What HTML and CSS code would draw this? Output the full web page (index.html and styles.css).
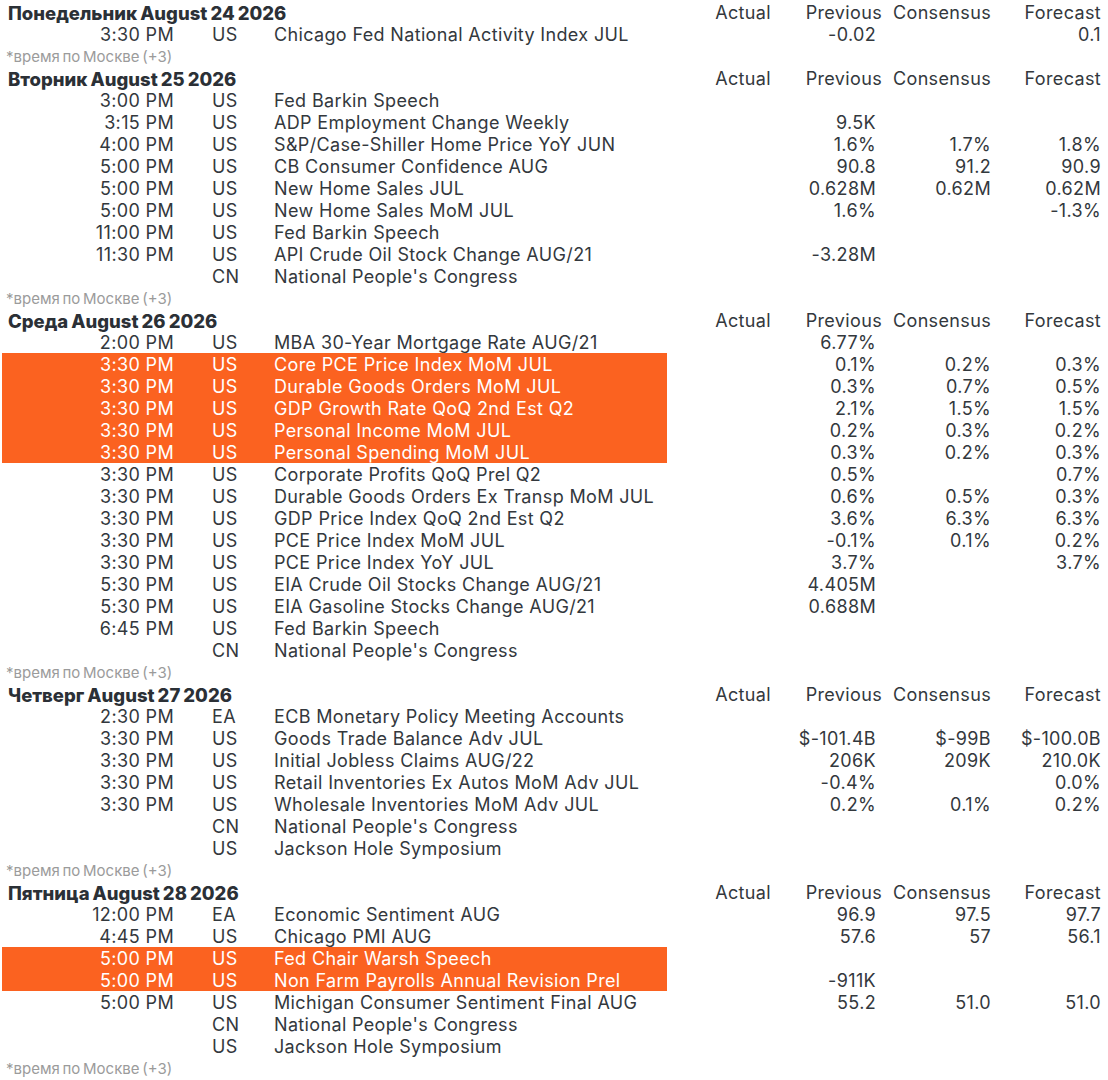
FILE: index.html
```html
<!DOCTYPE html>
<html lang="ru">
<head>
<meta charset="utf-8">
<title>Economic calendar</title>
<link rel="stylesheet" href="styles.css">
</head>
<body>
<div class="cal">

  <div class="day"><div class="title">Понедельник August 24 2026</div><div class="h">Actual</div><div class="h prev">Previous</div><div class="h">Consensus</div><div class="h">Forecast</div></div>
  <div class="row"><div class="t">3:30 PM</div><div class="c">US</div><div class="e">Chicago Fed National Activity Index JUL</div><div class="v"></div><div class="v">-0.02</div><div class="v"></div><div class="v">0.1</div></div>
  <div class="note">*время по Москве (+3)</div>

  <div class="day"><div class="title">Вторник August 25 2026</div><div class="h">Actual</div><div class="h prev">Previous</div><div class="h">Consensus</div><div class="h">Forecast</div></div>
  <div class="row"><div class="t">3:00 PM</div><div class="c">US</div><div class="e">Fed Barkin Speech</div><div class="v"></div><div class="v"></div><div class="v"></div><div class="v"></div></div>
  <div class="row"><div class="t">3:15 PM</div><div class="c">US</div><div class="e">ADP Employment Change Weekly</div><div class="v"></div><div class="v">9.5K</div><div class="v"></div><div class="v"></div></div>
  <div class="row"><div class="t">4:00 PM</div><div class="c">US</div><div class="e">S&amp;P/Case-Shiller Home Price YoY JUN</div><div class="v"></div><div class="v">1.6%</div><div class="v">1.7%</div><div class="v">1.8%</div></div>
  <div class="row"><div class="t">5:00 PM</div><div class="c">US</div><div class="e">CB Consumer Confidence AUG</div><div class="v"></div><div class="v">90.8</div><div class="v">91.2</div><div class="v">90.9</div></div>
  <div class="row"><div class="t">5:00 PM</div><div class="c">US</div><div class="e">New Home Sales JUL</div><div class="v"></div><div class="v">0.628M</div><div class="v">0.62M</div><div class="v">0.62M</div></div>
  <div class="row"><div class="t">5:00 PM</div><div class="c">US</div><div class="e">New Home Sales MoM JUL</div><div class="v"></div><div class="v">1.6%</div><div class="v"></div><div class="v">-1.3%</div></div>
  <div class="row"><div class="t">11:00 PM</div><div class="c">US</div><div class="e">Fed Barkin Speech</div><div class="v"></div><div class="v"></div><div class="v"></div><div class="v"></div></div>
  <div class="row"><div class="t">11:30 PM</div><div class="c">US</div><div class="e">API Crude Oil Stock Change AUG/21</div><div class="v"></div><div class="v">-3.28M</div><div class="v"></div><div class="v"></div></div>
  <div class="row"><div class="t"></div><div class="c">CN</div><div class="e">National People's Congress</div><div class="v"></div><div class="v"></div><div class="v"></div><div class="v"></div></div>
  <div class="note">*время по Москве (+3)</div>

  <div class="day"><div class="title">Среда August 26 2026</div><div class="h">Actual</div><div class="h prev">Previous</div><div class="h">Consensus</div><div class="h">Forecast</div></div>
  <div class="row"><div class="t">2:00 PM</div><div class="c">US</div><div class="e">MBA 30-Year Mortgage Rate AUG/21</div><div class="v"></div><div class="v">6.77%</div><div class="v"></div><div class="v"></div></div>
  <div class="row hl"><div class="t">3:30 PM</div><div class="c">US</div><div class="e">Core PCE Price Index MoM JUL</div><div class="v"></div><div class="v">0.1%</div><div class="v">0.2%</div><div class="v">0.3%</div></div>
  <div class="row hl"><div class="t">3:30 PM</div><div class="c">US</div><div class="e">Durable Goods Orders MoM JUL</div><div class="v"></div><div class="v">0.3%</div><div class="v">0.7%</div><div class="v">0.5%</div></div>
  <div class="row hl"><div class="t">3:30 PM</div><div class="c">US</div><div class="e">GDP Growth Rate QoQ 2nd Est Q2</div><div class="v"></div><div class="v">2.1%</div><div class="v">1.5%</div><div class="v">1.5%</div></div>
  <div class="row hl"><div class="t">3:30 PM</div><div class="c">US</div><div class="e">Personal Income MoM JUL</div><div class="v"></div><div class="v">0.2%</div><div class="v">0.3%</div><div class="v">0.2%</div></div>
  <div class="row hl"><div class="t">3:30 PM</div><div class="c">US</div><div class="e">Personal Spending MoM JUL</div><div class="v"></div><div class="v">0.3%</div><div class="v">0.2%</div><div class="v">0.3%</div></div>
  <div class="row"><div class="t">3:30 PM</div><div class="c">US</div><div class="e">Corporate Profits QoQ Prel Q2</div><div class="v"></div><div class="v">0.5%</div><div class="v"></div><div class="v">0.7%</div></div>
  <div class="row"><div class="t">3:30 PM</div><div class="c">US</div><div class="e">Durable Goods Orders Ex Transp MoM JUL</div><div class="v"></div><div class="v">0.6%</div><div class="v">0.5%</div><div class="v">0.3%</div></div>
  <div class="row"><div class="t">3:30 PM</div><div class="c">US</div><div class="e">GDP Price Index QoQ 2nd Est Q2</div><div class="v"></div><div class="v">3.6%</div><div class="v">6.3%</div><div class="v">6.3%</div></div>
  <div class="row"><div class="t">3:30 PM</div><div class="c">US</div><div class="e">PCE Price Index MoM JUL</div><div class="v"></div><div class="v">-0.1%</div><div class="v">0.1%</div><div class="v">0.2%</div></div>
  <div class="row"><div class="t">3:30 PM</div><div class="c">US</div><div class="e">PCE Price Index YoY JUL</div><div class="v"></div><div class="v">3.7%</div><div class="v"></div><div class="v">3.7%</div></div>
  <div class="row"><div class="t">5:30 PM</div><div class="c">US</div><div class="e">EIA Crude Oil Stocks Change AUG/21</div><div class="v"></div><div class="v">4.405M</div><div class="v"></div><div class="v"></div></div>
  <div class="row"><div class="t">5:30 PM</div><div class="c">US</div><div class="e">EIA Gasoline Stocks Change AUG/21</div><div class="v"></div><div class="v">0.688M</div><div class="v"></div><div class="v"></div></div>
  <div class="row"><div class="t">6:45 PM</div><div class="c">US</div><div class="e">Fed Barkin Speech</div><div class="v"></div><div class="v"></div><div class="v"></div><div class="v"></div></div>
  <div class="row"><div class="t"></div><div class="c">CN</div><div class="e">National People's Congress</div><div class="v"></div><div class="v"></div><div class="v"></div><div class="v"></div></div>
  <div class="note">*время по Москве (+3)</div>

  <div class="day"><div class="title">Четверг August 27 2026</div><div class="h">Actual</div><div class="h prev">Previous</div><div class="h">Consensus</div><div class="h">Forecast</div></div>
  <div class="row"><div class="t">2:30 PM</div><div class="c">EA</div><div class="e">ECB Monetary Policy Meeting Accounts</div><div class="v"></div><div class="v"></div><div class="v"></div><div class="v"></div></div>
  <div class="row"><div class="t">3:30 PM</div><div class="c">US</div><div class="e">Goods Trade Balance Adv JUL</div><div class="v"></div><div class="v">$-101.4B</div><div class="v">$-99B</div><div class="v">$-100.0B</div></div>
  <div class="row"><div class="t">3:30 PM</div><div class="c">US</div><div class="e">Initial Jobless Claims AUG/22</div><div class="v"></div><div class="v">206K</div><div class="v">209K</div><div class="v">210.0K</div></div>
  <div class="row"><div class="t">3:30 PM</div><div class="c">US</div><div class="e">Retail Inventories Ex Autos MoM Adv JUL</div><div class="v"></div><div class="v">-0.4%</div><div class="v"></div><div class="v">0.0%</div></div>
  <div class="row"><div class="t">3:30 PM</div><div class="c">US</div><div class="e">Wholesale Inventories MoM Adv JUL</div><div class="v"></div><div class="v">0.2%</div><div class="v">0.1%</div><div class="v">0.2%</div></div>
  <div class="row"><div class="t"></div><div class="c">CN</div><div class="e">National People's Congress</div><div class="v"></div><div class="v"></div><div class="v"></div><div class="v"></div></div>
  <div class="row"><div class="t"></div><div class="c">US</div><div class="e">Jackson Hole Symposium</div><div class="v"></div><div class="v"></div><div class="v"></div><div class="v"></div></div>
  <div class="note">*время по Москве (+3)</div>

  <div class="day"><div class="title">Пятница August 28 2026</div><div class="h">Actual</div><div class="h prev">Previous</div><div class="h">Consensus</div><div class="h">Forecast</div></div>
  <div class="row"><div class="t">12:00 PM</div><div class="c">EA</div><div class="e">Economic Sentiment AUG</div><div class="v"></div><div class="v">96.9</div><div class="v">97.5</div><div class="v">97.7</div></div>
  <div class="row"><div class="t">4:45 PM</div><div class="c">US</div><div class="e">Chicago PMI AUG</div><div class="v"></div><div class="v">57.6</div><div class="v">57</div><div class="v">56.1</div></div>
  <div class="row hl"><div class="t">5:00 PM</div><div class="c">US</div><div class="e">Fed Chair Warsh Speech</div><div class="v"></div><div class="v"></div><div class="v"></div><div class="v"></div></div>
  <div class="row hl"><div class="t">5:00 PM</div><div class="c">US</div><div class="e">Non Farm Payrolls Annual Revision Prel</div><div class="v"></div><div class="v">-911K</div><div class="v"></div><div class="v"></div></div>
  <div class="row"><div class="t">5:00 PM</div><div class="c">US</div><div class="e">Michigan Consumer Sentiment Final AUG</div><div class="v"></div><div class="v">55.2</div><div class="v">51.0</div><div class="v">51.0</div></div>
  <div class="row"><div class="t"></div><div class="c">CN</div><div class="e">National People's Congress</div><div class="v"></div><div class="v"></div><div class="v"></div><div class="v"></div></div>
  <div class="row"><div class="t"></div><div class="c">US</div><div class="e">Jackson Hole Symposium</div><div class="v"></div><div class="v"></div><div class="v"></div><div class="v"></div></div>
  <div class="note">*время по Москве (+3)</div>

</div>
</body>
</html>
```

FILE: styles.css
```css
html, body {
  margin: 0;
  padding: 0;
  background: #ffffff;
}

.cal {
  padding: 1px 0 0 2px;
  font-family: "Inter", "Liberation Sans", sans-serif;
  font-size: 18px;
  color: #33383d;
}

.row,
.day {
  display: grid;
  grid-template-columns: 172px 100px 393px 104px 105px 115px 110px;
  grid-template-rows: 22px;
  height: 22px;
  white-space: nowrap;
}

.row > div,
.day > div {
  box-sizing: border-box;
  height: 22px;
  padding-top: 1px;
  line-height: 22px;
  letter-spacing: 0.35px;
}

.t {
  text-align: right;
}

.row > .c {
  padding-left: 38px;
}

.v {
  text-align: right;
}

.hl .t,
.hl .c,
.hl .e {
  background: #fb6220;
  color: #ffffff;
}

.day > .title {
  grid-column: 1 / 4;
  padding-left: 6px;
  font-size: 18.5px;
  font-weight: 800;
  letter-spacing: 0;
  word-spacing: -1px;
  color: #2b3036;
}

.day .h {
  text-align: right;
}

.day .h.prev {
  margin-right: -6px;
}

.note {
  box-sizing: border-box;
  height: 22px;
  padding-top: 1px;
  line-height: 22px;
  padding-left: 4px;
  font-size: 15px;
  word-spacing: -1.5px;
  color: #9b9b9b;
}
```
